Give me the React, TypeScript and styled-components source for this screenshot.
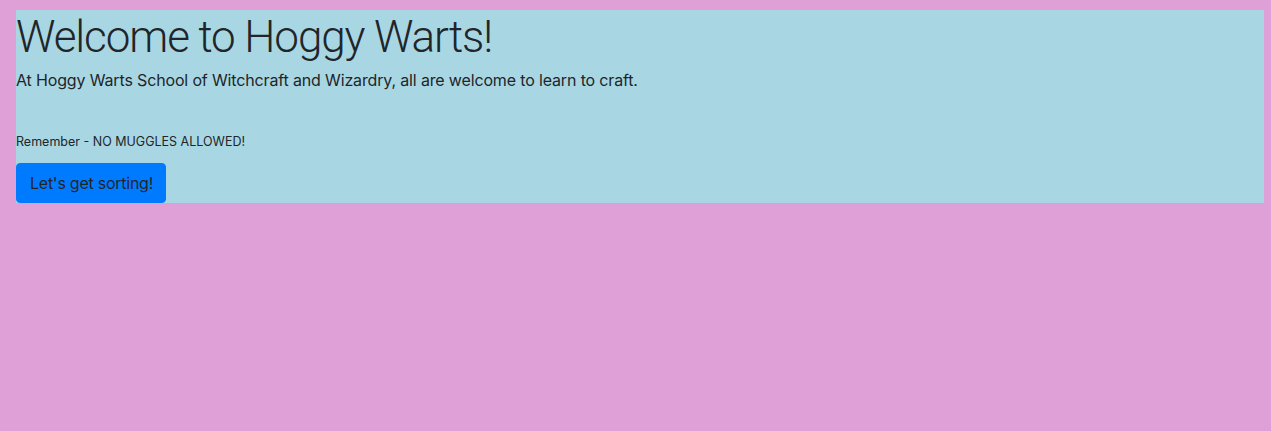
import React from "react";
import styled, { createGlobalStyle } from "styled-components";

const GlobalStyle = createGlobalStyle`
  html, body {
    margin: 0;
    padding: 0;
    background: #dfa0d7;
  }
  body {
    font-family: Inter, "Noto Sans", "Liberation Sans", sans-serif;
    color: #212529;
  }
`;

// PAGE
const Page = styled.div`
  min-height: 431px;
  padding: 10px 7px 0 16px;
  box-sizing: border-box;
`;

const Banner = styled.section`
  background: #a8d7e3;
  display: flex;
  flex-direction: column;
  align-items: flex-start;
`;

const Title = styled.h1`
  margin: 0 0 4px;
  font-family: Roboto, Inter, sans-serif;
  font-size: 44px;
  font-weight: 300;
  line-height: 54px;
  letter-spacing: -1.1px;
`;

const Lead = styled.p`
  margin: 0 0 40px;
  font-size: 16px;
  line-height: 24px;
  letter-spacing: -0.15px;
`;

const Note = styled.p`
  margin: 0 0 11px;
  font-size: 12.5px;
  line-height: 20px;
`;

const SortButton = styled.button`
  font-family: inherit;
  font-size: 16px;
  line-height: 24px;
  color: #212529;
  background: #007bff;
  border: 1px solid #007bff;
  border-radius: 4px;
  padding: 7px 12px 7px 13px;
  height: 40px;
  cursor: pointer;
  letter-spacing: -0.25px;
`;

const App = () => {
  const handleSort = () => {
    console.log("Sorting!");
  };

  return (
    <Page>
      <GlobalStyle />
      <Banner>
        <Title>Welcome to Hoggy Warts!</Title>
        <Lead>
          At Hoggy Warts School of Witchcraft and Wizardry, all are welcome to
          learn to craft.
        </Lead>
        <Note>Remember - NO MUGGLES ALLOWED!</Note>
        <SortButton onClick={handleSort}>Let's get sorting!</SortButton>
      </Banner>
    </Page>
  );
};

export default App;
